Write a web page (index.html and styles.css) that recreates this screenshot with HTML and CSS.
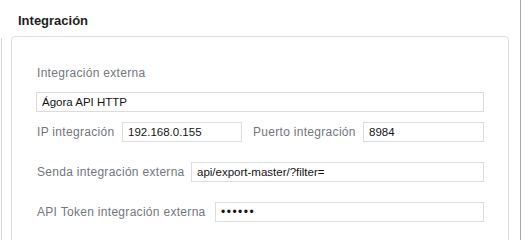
FILE: index.html
```html
<!DOCTYPE html>
<html lang="es">
<head>
  <meta charset="UTF-8">
  <meta name="viewport" content="width=device-width, initial-scale=1.0">
  <title>Integración</title>
  <link rel="stylesheet" href="styles.css">
</head>
<body>
  <div class="pagina">
    <h2 class="titulo">Integración</h2>

    <div class="cuerpo">
      <div class="grupo">
        <label class="etiqueta etiqueta-arriba" for="externa">Integración externa</label>
        <input type="text" id="externa" class="campo" value="Ágora API HTTP">

        <div class="fila">
          <label class="etiqueta etiqueta-ip" for="ip">IP integración</label>
          <input type="text" id="ip" class="campo campo-corto" value="192.168.0.155">
          <label class="etiqueta etiqueta-puerto" for="puerto">Puerto integración</label>
          <input type="text" id="puerto" class="campo campo-flex" value="8984">
        </div>

        <div class="fila fila-separada">
          <label class="etiqueta etiqueta-senda" for="senda">Senda integración externa</label>
          <input type="text" id="senda" class="campo campo-flex" value="api/export-master/?filter=">
        </div>

        <div class="fila fila-separada">
          <label class="etiqueta etiqueta-token" for="token">API Token integración externa</label>
          <input type="password" id="token" class="campo campo-flex campo-clave" value="123456">
        </div>
      </div>
    </div>
  </div>
</body>
</html>
```

FILE: styles.css
```css
html, body {
  margin: 0;
  padding: 0;
  height: 240px;
  overflow: hidden;
  background-color: #ffffff;
  font-family: "Liberation Sans", Arial, sans-serif;
}

.pagina {
  width: 521px;
  height: 240px;
  box-sizing: border-box;
  border-right: 1px solid #a8a8a8; /* borde del panel */
  display: flex;
  flex-direction: column;
}

.titulo {
  margin: 0;
  padding: 13px 0 0 18px;
  font-size: 13px;
  line-height: 16px;
  font-weight: bold;
  color: #1e1e1e;
}

.cuerpo {
  flex: 1;
  margin: 9px 0 0 1px;
  border-left: 1px solid #d8d8d8;
  padding-left: 9px;
  padding-right: 11px;
}

.grupo {
  margin-top: -2px;
  border: 1px solid #dddddd;
  border-radius: 4px;
  padding: 28px 24px 30px 24px;
}

.etiqueta {
  display: block;
  font-size: 12px;
  line-height: 16px;
  letter-spacing: 0.3px;
  color: #72767d;
  padding-left: 1px;
  box-sizing: border-box;
  flex-shrink: 0;
}

.etiqueta-arriba {
  margin-bottom: 11px;
}

.campo {
  display: block;
  box-sizing: border-box;
  height: 20px;
  width: 100%;
  margin: 0;
  padding: 0 5px;
  border: 1px solid #dcdcdc;
  border-radius: 0;
  background-color: #ffffff;
  font-family: "Liberation Sans", Arial, sans-serif;
  font-size: 11.5px;
  color: #141414;
  outline: none;
}

.campo-clave {
  font-size: 12px;
  letter-spacing: 1.5px;
}

.fila {
  display: flex;
  align-items: center;
  margin-top: 10px;
}

.fila-separada {
  margin-top: 20px;
}

.etiqueta-ip {
  width: 86px;
}

.campo-corto {
  width: 120px;
}

.etiqueta-puerto {
  width: 121px;
  padding-left: 11px;
}

.campo-flex {
  flex: 1;
  width: auto;
  min-width: 0;
}

.etiqueta-senda {
  width: 155px;
}

.etiqueta-token {
  width: 179px;
}
```
